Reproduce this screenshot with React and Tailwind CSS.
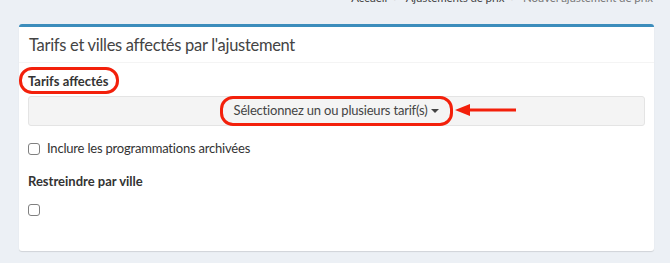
import React from 'react';

const red = 'border-[#f3200b]';

function Checkbox() {
  return <span className="inline-block w-[12px] h-[12px] rounded-[3px] border border-[#808080] bg-white shrink-0" />;
}

export default function App() {
  return (
    <div className="w-[670px] h-[263px] bg-[#ecf0f5] overflow-hidden font-['Lato','Open_Sans',sans-serif] text-[#333]">
      {/* Breadcrumb (cut off at top) */}
      <div className="h-[24px] flex justify-end items-start pr-[17px] text-[11.5px] leading-[12px] -mt-[8px] gap-[6px] tracking-[-0.1px]">
        <span className="text-[#444]">Accueil</span>
        <span className="text-[#ccc]">&gt;</span>
        <span className="text-[#444]">Ajustements de prix</span>
        <span className="text-[#ccc]">&gt;</span>
        <span className="text-[#777]">Nouvel ajustement de prix</span>
      </div>

      <div className="mt-[8px] ml-[19px] w-[635px] h-[227px] bg-white border-t-[3px] border-[#3c8dbc] rounded-[3px] shadow-[0_1px_1px_rgba(0,0,0,0.12)]">
        <div className="h-[36px] flex items-center px-[10px] border-b border-[#f4f4f4]">
          <h3 className="text-[16.5px] tracking-[-0.3px] text-[#444] leading-[20px]">Tarifs et villes affectés par l'ajustement</h3>
        </div>

        <div className="relative px-[9px] pt-[5px]">
          {/* Tarifs affectés */}
          <div className="relative inline-block">
            <span className="block h-[20px] leading-[20px] text-[13px] font-bold text-[#333]">Tarifs affectés</span>
            <span className={`absolute -left-[9px] -right-[11px] -top-[4px] -bottom-[3px] border-[3px] ${red} rounded-[13px]`} />
          </div>

          <div className="mt-[4px] h-[30px] bg-[#f4f4f4] border border-[#e4e4e4] rounded-[3px] flex items-center justify-center">
            <span className="relative inline-flex items-center h-full px-[13px] text-[13px] tracking-[-0.2px] text-[#444]">
              Sélectionnez un ou plusieurs tarif(s)
              <span className="ml-[4px] inline-block w-0 h-0 border-t-[4px] border-t-[#444] border-x-[4px] border-x-transparent" />
              <span className={`absolute -left-[1px] -right-[1px] -top-[1px] -bottom-[1px] border-[3px] ${red} rounded-[13px]`} />
            </span>
          </div>

          {/* Arrow annotation */}
          <svg className="absolute left-[436px] top-[39px]" width="64" height="16" viewBox="0 0 64 16">
            <line x1="12" y1="8" x2="61" y2="8" stroke="#f3200b" strokeWidth="3" />
            <polygon points="0,8 15,2 15,14" fill="#f3200b" />
          </svg>

          <label className="mt-[13px] h-[20px] flex items-center gap-[7px] text-[13px] tracking-[-0.2px] text-[#333]">
            <Checkbox />
            Inclure les programmations archivées
          </label>

          <div className="mt-[12px] h-[20px] leading-[20px] text-[13px] font-bold text-[#333]">Restreindre par ville</div>

          <div className="mt-[12px] h-[13px] flex items-center">
            <Checkbox />
          </div>
        </div>
      </div>
    </div>
  );
}
